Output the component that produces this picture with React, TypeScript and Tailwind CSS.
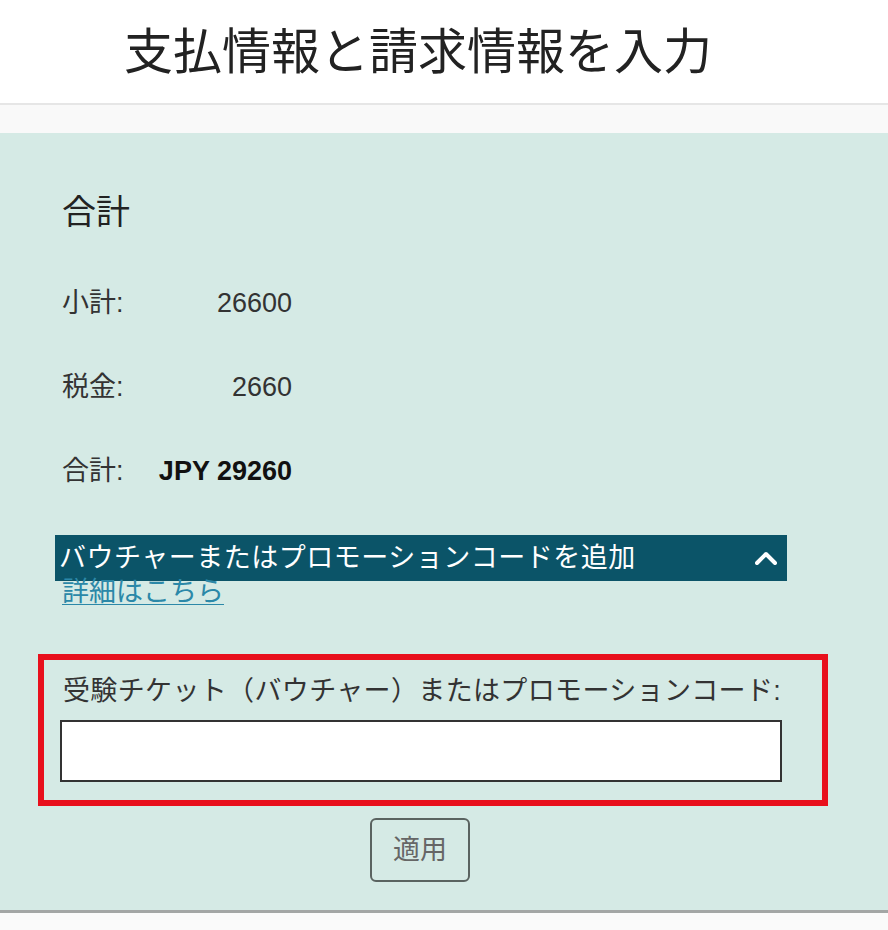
import { useState } from "react";

const jp = "font-['Liberation_Sans','Noto_Sans_CJK_JP',sans-serif]";

function Row({ label, value, bold }: { label: string; value: string; bold?: boolean }) {
  return (
    <div className="flex h-[32px] items-center leading-[32px]">
      <span className="w-[95px]">{label}</span>
      <span className={`w-[135px] text-right ${bold ? "font-bold text-[#111]" : ""}`}>{value}</span>
    </div>
  );
}

export default function App() {
  const [open, setOpen] = useState(true);
  const [code, setCode] = useState("");

  return (
    <div className={`min-h-[930px] bg-[#fafafa] text-[#333] ${jp}`}>
      {/* Header */}
      <div className="h-[103px] bg-white pl-[124px] pt-[23px]">
        <h1 className="text-[49px] leading-[58px] font-normal text-[#222]">支払情報と請求情報を入力</h1>
      </div>
      <div className="h-[2px] bg-[#e6e6e6]" />
      <div className="h-[28px] bg-[#f9f9f9]" />

      {/* Summary panel */}
      <div className="border-b-[3px] border-[#a3a6a5] bg-[#d5eae5] pb-[28px] text-[27px]">
        <div className="pl-[62px] pt-[59px]">
          <h2 className="text-[34px] leading-[40px] font-normal text-[#222]">合計</h2>
          <div className="mt-[55px] flex flex-col gap-[52px]">
            <Row label="小計:" value="26600" />
            <Row label="税金:" value="2660" />
            <Row label="合計:" value="JPY 29260" bold />
          </div>
        </div>

        <div className="ml-[55px] mt-[48px] w-[732px]">
          <button
            onClick={() => setOpen(!open)}
            className="flex h-[46px] w-full items-center justify-between bg-[#0b5468] pl-[4px] pr-[10px] text-left text-[27px] leading-[46px] tracking-[0.5px] text-white"
          >
            <span>バウチャーまたはプロモーションコードを追加</span>
            <svg width="22" height="14" viewBox="0 0 22 14" className={open ? "" : "rotate-180"}>
              <polyline points="2,12 11,3 20,12" fill="none" stroke="white" strokeWidth="4" strokeLinecap="round" strokeLinejoin="round" />
            </svg>
          </button>
          <a href="#" className="-mt-[5px] ml-[7px] block w-fit leading-[32px] text-[#2b88a8] underline decoration-1 underline-offset-[3px]">
            詳細はこちら
          </a>
        </div>

        {open && (
          <>
            <div className="ml-[38px] mt-[46px] w-[790px] border-[6px] border-[#e8101c] pb-[18px] pl-[16px] pr-[40px] pt-[15px]">
              <label className="ml-[3px] block leading-[32px] tracking-[0.35px]">受験チケット（バウチャー）またはプロモーションコード:</label>
              <input
                value={code}
                onChange={(e) => setCode(e.target.value)}
                className="mt-[13px] block h-[62px] w-full border-2 border-[#333] bg-white px-2 outline-none"
              />
            </div>
            <div className="mt-[12px] pl-[370px]">
              <button className="h-[64px] w-[100px] rounded-[6px] border-2 border-[#5a6360] text-[27px] text-[#666]">適用</button>
            </div>
          </>
        )}
      </div>
    </div>
  );
}
